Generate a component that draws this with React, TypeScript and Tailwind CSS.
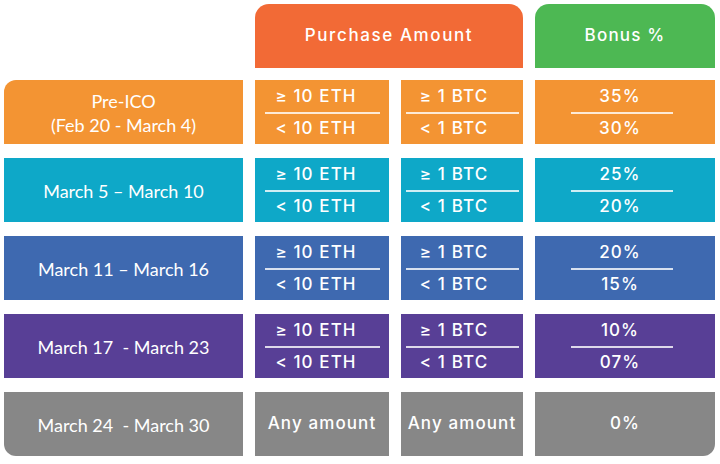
const rows = [
  {
    label: ['Pre-ICO', '(Feb 20 - March 4)'],
    bg: 'bg-[#f39433]',
    first: 'rounded-tl-[12px]',
    last: '',
    eth: ['≥ 10 ETH', '< 10 ETH'],
    btc: ['≥ 1 BTC', '< 1 BTC'],
    bonus: ['35%', '30%'],
  },
  {
    label: ['March 5 – March 10'],
    bg: 'bg-[#0ea8c8]',
    first: '',
    last: '',
    eth: ['≥ 10 ETH', '< 10 ETH'],
    btc: ['≥ 1 BTC', '< 1 BTC'],
    bonus: ['25%', '20%'],
  },
  {
    label: ['March 11 – March 16'],
    bg: 'bg-[#3e69b0]',
    first: '',
    last: '',
    eth: ['≥ 10 ETH', '< 10 ETH'],
    btc: ['≥ 1 BTC', '< 1 BTC'],
    bonus: ['20%', '15%'],
  },
  {
    label: ['March 17  - March 23'],
    bg: 'bg-[#583f96]',
    first: '',
    last: '',
    eth: ['≥ 10 ETH', '< 10 ETH'],
    btc: ['≥ 1 BTC', '< 1 BTC'],
    bonus: ['10%', '07%'],
  },
  {
    label: ['March 24  - March 30'],
    bg: 'bg-[#878787]',
    first: 'rounded-bl-[12px]',
    last: 'rounded-br-[12px]',
    eth: ['Any amount'],
    btc: ['Any amount'],
    bonus: ['0%'],
  },
]

const cellFont = { fontFamily: 'Inter, sans-serif' }

function Split({ items, line, pad }: { items: string[]; line: string; pad: string }) {
  if (items.length === 1) {
    return <div className="flex h-full items-center justify-center">{items[0]}</div>
  }
  return (
    <div className="flex h-full flex-col">
      <div className={`flex flex-1 items-center justify-center pt-[2px] ${pad}`}>{items[0]}</div>
      <div className={`h-[2px] bg-white/80 ${line}`} />
      <div className={`flex flex-1 items-center justify-center ${pad}`}>{items[1]}</div>
    </div>
  )
}

export default function App() {
  return (
    <div className="h-[464px] w-[720px] bg-white pl-[4px] pt-[4px] text-white">
      <div className="grid grid-cols-[239px_134px_122px_180px] gap-x-[12px]">
        <div />
        <div
          className="col-span-2 flex h-[64px] items-center justify-center rounded-t-[14px] bg-[#f26a36] text-[17px] font-medium tracking-[1.6px]"
          style={cellFont}
        >
          Purchase Amount
        </div>
        <div
          className="flex h-[64px] items-center justify-center rounded-t-[14px] bg-[#4db853] text-[17px] font-medium tracking-[1.2px]"
          style={cellFont}
        >
          Bonus %
        </div>
      </div>

      <div className="mt-[12px] flex flex-col gap-y-[14px]">
        {rows.map((r, i) => (
          <div key={i} className="grid h-[64px] grid-cols-[239px_134px_122px_180px] gap-x-[12px]">
            <div
              className={`flex flex-col items-center justify-center pt-[2px] text-[18px] leading-[24px] ${r.bg} ${r.first}`}
              style={{ fontFamily: 'Lato, sans-serif' }}
            >
              {r.label.map((l) => (
                <span key={l} className="whitespace-pre">
                  {l}
                </span>
              ))}
            </div>
            <div className={`text-[17px] font-medium tracking-[1.1px] ${r.bg}`} style={cellFont}>
              <Split items={r.eth} line="ml-[10px] mr-[9px]" pad="pr-[12px]" />
            </div>
            <div className={`text-[17px] font-medium tracking-[1.1px] ${r.bg}`} style={cellFont}>
              <Split items={r.btc} line="ml-[5px] mr-[4px]" pad="pr-[16px]" />
            </div>
            <div className={`text-[17px] font-medium tracking-[1.1px] ${r.bg} ${r.last}`} style={cellFont}>
              <Split items={r.bonus} line="ml-[36px] mr-[42px]" pad="pr-[10px]" />
            </div>
          </div>
        ))}
      </div>
    </div>
  )
}
